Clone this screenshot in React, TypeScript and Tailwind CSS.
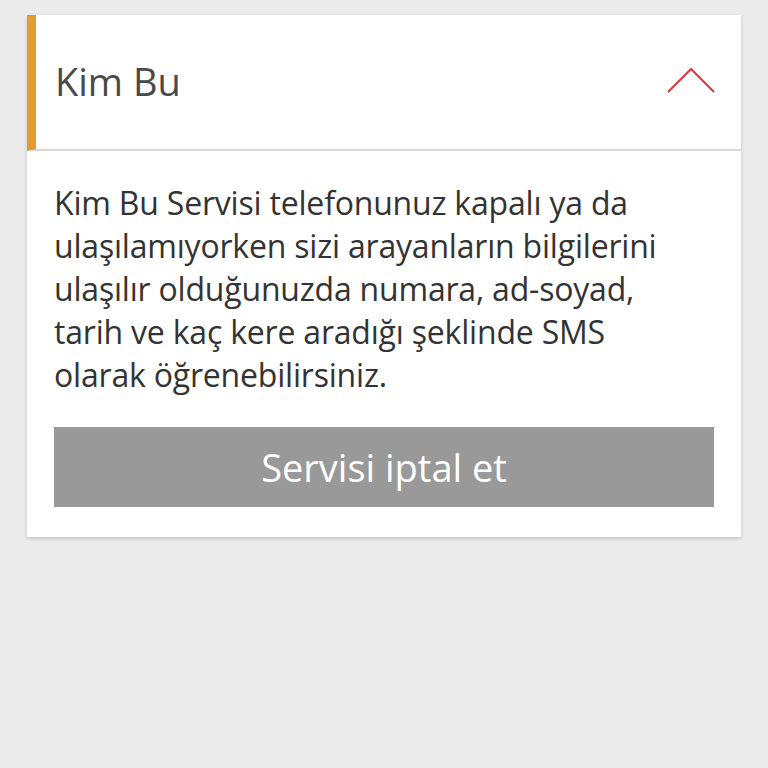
export default function App() {
  return (
    <div className="min-h-[768px] w-full bg-[#ebebeb] pt-[15px] px-[27px]" style={{ fontFamily: '"Open Sans", "Noto Sans", sans-serif' }}>
      <div className="bg-white shadow-[0_2px_4px_rgba(0,0,0,0.15)]">
        {/* header */}
        <div className="flex h-[136px] items-center justify-between border-b-2 border-[#d9d9d9] border-l-[9px] border-l-[#e39c2f] pl-[19px] pr-[26px]">
          <h2 className="text-[38px] text-[#4a4a4a] pb-[2px]">Kim Bu</h2>
          <svg width="48" height="26" viewBox="0 0 48 26" fill="none" className="mb-[4px]">
            <path d="M1 25 L24 2 L47 25" stroke="#e2323c" strokeWidth="2" />
          </svg>
        </div>
        {/* body */}
        <div className="px-[27px] pt-[30px] pb-[30px]">
          <p className="text-[32px] leading-[43px] text-[#333333] tracking-[-0.2px]">
            Kim Bu Servisi telefonunuz kapalı ya da
            <br />
            ulaşılamıyorken sizi arayanların bilgilerini
            <br />
            ulaşılır olduğunuzda numara, ad-soyad,
            <br />
            tarih ve kaç kere aradığı şeklinde SMS
            <br />
            olarak öğrenebilirsiniz.
          </p>
          <button className="mt-[31px] flex h-[80px] w-full items-center justify-center bg-[#999999] text-[38px] text-white">
            Servisi iptal et
          </button>
        </div>
      </div>
    </div>
  );
}
